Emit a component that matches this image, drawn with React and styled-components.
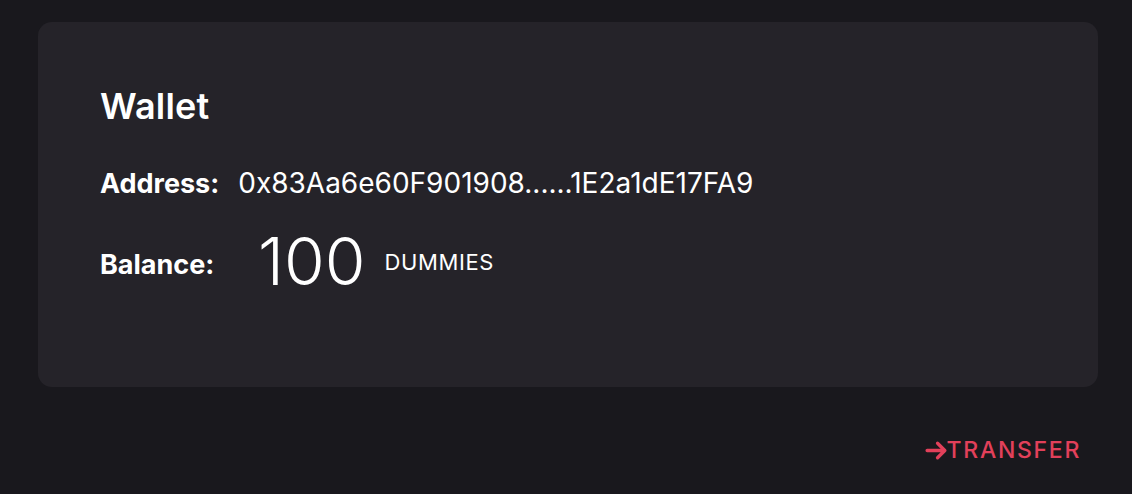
import React from 'react';
import styled, { createGlobalStyle } from 'styled-components';

const GlobalStyle = createGlobalStyle`
  html, body {
    margin: 0;
    padding: 0;
    background: #19181d;
    font-family: Inter, "Noto Sans", sans-serif;
    color: #ffffff;
  }
`;

const Page = styled.div`
  display: flex;
  flex-direction: column;
  padding: 22px 34px 0 38px;
  min-height: 494px;
  box-sizing: border-box;
`;

const Card = styled.section`
  background: #252329;
  border-radius: 14px;
  height: 365px;
  box-sizing: border-box;
  padding: 66px 64px 0 62px;
`;

const Title = styled.h2`
  margin: 0 0 45px;
  font-size: 36px;
  line-height: 1;
  font-weight: 600;
  letter-spacing: 0.2px;
`;

const Row = styled.div`
  display: flex;
  align-items: center;
  gap: ${p => p.gap || 18}px;
  margin-bottom: ${p => p.mb || 0}px;
  line-height: 1;
`;

const Label = styled.span`
  font-size: 27px;
  font-weight: 700;
  min-width: ${p => p.w || 0}px;
  padding-top: ${p => p.nudge || 0}px;
`;

const Value = styled.span`
  font-size: 28px;
  font-weight: 400;
`;

const Amount = styled.span`
  font-size: 66px;
  font-weight: 300;
  margin-right: -3px;
`;

const Unit = styled.span`
  font-size: 22px;
  font-weight: 400;
  letter-spacing: 0.6px;
  padding-top: 2px;
`;

const Footer = styled.div`
  display: flex;
  justify-content: flex-end;
  padding: 51px 17px 0 0;
`;

const TransferButton = styled.button`
  display: flex;
  align-items: center;
  background: none;
  border: none;
  padding: 0;
  color: #e2405a;
  font-family: Inter, sans-serif;
  font-size: 23px;
  line-height: 1;
  font-weight: 500;
  letter-spacing: 1.7px;
  cursor: pointer;
  svg { width: 25px; height: 25px; margin-right: -2px; }
`;

export default function App() {
  return (
    <>
      <GlobalStyle />
      <Page>
        <Card>
          <Title>Wallet</Title>
          <Row mb={31} gap={19}>
            <Label>Address:</Label>
            <Value>0x83Aa6e60F901908......1E2a1dE17FA9</Value>
          </Row>
          <Row gap={22}>
            <Label w={136} nudge={6}>Balance:</Label>
            <Amount>100</Amount>
            <Unit>DUMMIES</Unit>
          </Row>
        </Card>
        <Footer>
          <TransferButton>
            <svg viewBox="0 0 24 24" fill="none" stroke="currentColor" strokeWidth="3.2" strokeLinecap="round" strokeLinejoin="round">
              <path d="M3 12h17M13 5l7 7-7 7" />
            </svg>
            TRANSFER
          </TransferButton>
        </Footer>
      </Page>
    </>
  );
}
